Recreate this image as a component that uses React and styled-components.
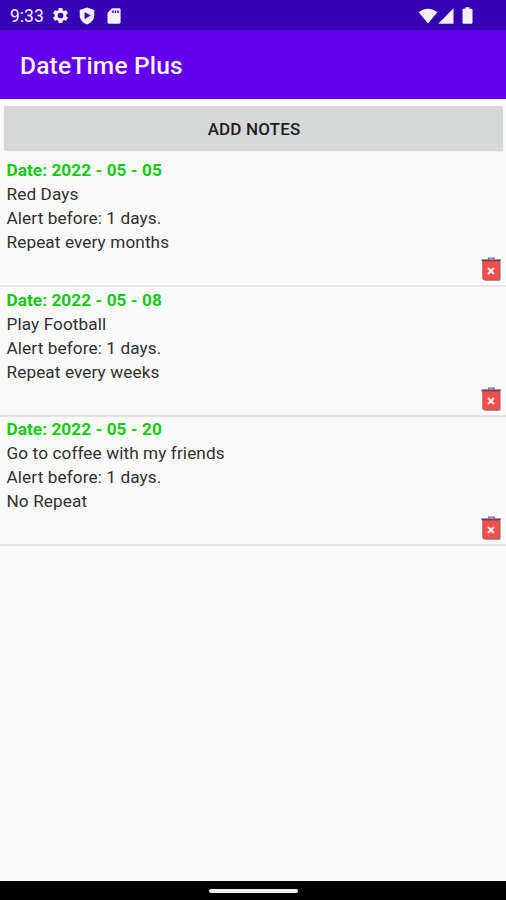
import React from "react";
import styled, { createGlobalStyle } from "styled-components";

const GlobalStyle = createGlobalStyle`
  * { box-sizing: border-box; }
  body { margin: 0; background: #fafafa; font-family: Roboto, sans-serif; }
`;

const Screen = styled.div`
  display: flex;
  flex-direction: column;
  height: 900px;
  width: 100%;
  overflow: hidden;
  background: #fafafa;
`;

const StatusBar = styled.header`
  flex: none;
  height: 30px;
  padding: 1px 33px 0 10px;
  display: flex;
  align-items: center;
  justify-content: space-between;
  background: #3700b3;
  color: #f4efff;
`;

const StatusGroup = styled.div`
  display: flex;
  align-items: center;
  gap: ${(p) => p.$gap}px;
  svg { display: block; fill: currentColor; }
`;

const Clock = styled.span`
  width: 34px;
  margin-right: -3px;
  font-size: 17.5px;
  line-height: 30px;
  white-space: nowrap;
`;

const AppBar = styled.div`
  flex: none;
  height: 69px;
  padding: 2px 20px 0;
  display: flex;
  align-items: center;
  background: #6200ee;
`;

const Title = styled.h1`
  margin: 0;
  color: #f8f2ff;
  font-size: 24.5px;
  font-weight: 500;
  letter-spacing: 0.2px;
`;

const AddButton = styled.button`
  flex: none;
  height: 45px;
  margin: 7px 3px 7px 4px;
  padding: 0 0 0 1px;
  border: 0;
  border-radius: 2px;
  background: #d6d7d7;
  box-shadow: 0 0 1px #d6d7d7;
  color: #1d1e1e;
  font: 500 17px Roboto, sans-serif;
  letter-spacing: 0.15px;
`;

const NoteList = styled.ul`
  flex: 1;
  margin: 0;
  padding: 0;
  list-style: none;
`;

const Note = styled.li`
  height: 129.4px;
  padding: 1.4px 4px 0 6.5px;
  display: flex;
  justify-content: space-between;
  border-bottom: 2px solid #e5e5e5;
`;

const NoteText = styled.div`
  line-height: 23.9px;
  font-size: 17.2px;
  letter-spacing: 0.1px;
  color: #303030;
`;

const NoteLine = styled.div`
  font-weight: 400;
  white-space: nowrap;
`;

const NoteDate = styled(NoteLine)`
  font-weight: 700;
  letter-spacing: 0.06px;
  color: #12c912;
`;

const DeleteButton = styled.button`
  align-self: flex-end;
  margin: 0 0 3px;
  padding: 0;
  border: 0;
  background: none;
  line-height: 0;
`;

const NavBar = styled.footer`
  flex: none;
  height: 19px;
  padding-top: 1px;
  display: flex;
  align-items: center;
  justify-content: center;
  background: #000;
`;

const NavHandle = styled.div`
  width: 89px;
  height: 4px;
  border-radius: 2px;
  background: #f3eef3;
`;

const NOTES = [
  { date: "2022 - 05 - 05", name: "Red Days", repeat: "Repeat every months" },
  { date: "2022 - 05 - 08", name: "Play Football", repeat: "Repeat every weeks" },
  { date: "2022 - 05 - 20", name: "Go to coffee with my friends", repeat: "No Repeat" },
];

const GearIcon = () => (
  <svg width="19" height="19" viewBox="0 0 24 24">
    <path d="M19.14 12.94c.04-.3.06-.61.06-.94 0-.32-.02-.64-.07-.94l2.03-1.58c.18-.14.23-.41.12-.61l-1.92-3.32c-.12-.22-.37-.29-.59-.22l-2.39.96c-.5-.38-1.03-.7-1.62-.94l-.36-2.54c-.04-.24-.24-.41-.48-.41h-3.84c-.24 0-.43.17-.47.41l-.36 2.54c-.59.24-1.13.57-1.62.94l-2.39-.96c-.22-.08-.47 0-.59.22L2.74 8.87c-.12.21-.08.47.12.61l2.03 1.58c-.05.3-.09.63-.09.94s.02.64.07.94l-2.03 1.58c-.18.14-.23.41-.12.61l1.92 3.32c.12.22.37.29.59.22l2.39-.96c.5.38 1.03.7 1.62.94l.36 2.54c.05.24.24.41.48.41h3.84c.24 0 .44-.17.47-.41l.36-2.54c.59-.24 1.13-.56 1.62-.94l2.39.96c.22.08.47 0 .59-.22l1.92-3.32c.12-.22.07-.47-.12-.61l-2.01-1.58zM12 15.6A3.6 3.6 0 1 1 12 8.4a3.6 3.6 0 0 1 0 7.2z" />
  </svg>
);

const ShieldIcon = () => (
  <svg width="16" height="18" viewBox="0 0 16 18">
    <path fillRule="evenodd" d="M8 .5 15.3 3v5.200c0 4.200-2.800 7.700-7.300 9.300C3.500 15.900.7 12.400.7 8.200V3zM5.600 5v7.200L11.500 8.600z" />
  </svg>
);

const SdCardIcon = () => (
  <svg width="14" height="16" viewBox="0 0 14 16">
    <path fillRule="evenodd" d="M5 .3h7.200c.8 0 1.400.6 1.400 1.400v12.600c0 .8-.6 1.400-1.400 1.400H1.900c-.8 0-1.400-.6-1.400-1.400V4.800zM5.300 2.400v2.700h1.400V2.400zm2.500 0v2.700h1.400V2.400zm2.500 0v2.700h1.400V2.400z" />
  </svg>
);

const SdCardSlot = styled.span`
  margin-left: 2px;
`;

const WifiIcon = () => (
  <svg width="20" height="16" viewBox="0 0 20 16">
    <path d="M.7 4.300C5.700-.4 14.300-.4 19.300 4.300L10 15.600z" />
  </svg>
);

const SignalIcon = () => (
  <svg width="16" height="16" viewBox="0 0 16 16">
    <path d="M15.500.3v15.400H.2z" />
  </svg>
);

const BatterySlot = styled.span`
  margin-left: 8px;
`;

const BatteryIcon = () => (
  <svg width="11" height="17" viewBox="0 0 11 17">
    <path d="M3.400.3h4.200v1.500h1.600c.8 0 1.300.5 1.300 1.300v12.300c0 .8-.5 1.300-1.300 1.300H1.800c-.8 0-1.300-.5-1.300-1.300V3.100c0-.8.5-1.300 1.300-1.300h1.600z" />
  </svg>
);

const TrashIcon = () => (
  <svg width="21" height="25" viewBox="0 0 21 25">
    <path d="M3 5h16.700v17.500q0 1.500-1.500 1.500H4z" fill="#aaa9b2" />
    <path d="M1.700 4h17v17.300q0 1.500-1.500 1.500H3.200q-1.500 0-1.500-1.500z" fill="#f44e4b" stroke="#a64356" strokeWidth=".7" />
    <path d="M7.500 2.500V1.200h5.600v1.300" fill="none" stroke="#777187" strokeWidth="1.300" />
    <path d="M.5 3.300h19.300" stroke="#68445f" strokeWidth="1.800" />
    <path d="m7 11 6 6m0-6-6 6" stroke="#fff0ee" strokeWidth="2" />
  </svg>
);

export default function App() {
  return (
    <Screen>
      <GlobalStyle />
      <StatusBar>
        <StatusGroup $gap={9.5}>
          <Clock>9:33</Clock>
          <GearIcon />
          <ShieldIcon />
          <SdCardSlot>
            <SdCardIcon />
          </SdCardSlot>
        </StatusGroup>
        <StatusGroup $gap={0}>
          <WifiIcon />
          <SignalIcon />
          <BatterySlot>
            <BatteryIcon />
          </BatterySlot>
        </StatusGroup>
      </StatusBar>
      <AppBar>
        <Title>DateTime Plus</Title>
      </AppBar>
      <AddButton type="button">ADD NOTES</AddButton>
      <NoteList>
        {NOTES.map((note) => (
          <Note key={note.date}>
            <NoteText>
              <NoteDate>Date: {note.date}</NoteDate>
              <NoteLine>{note.name}</NoteLine>
              <NoteLine>Alert before: 1 days.</NoteLine>
              <NoteLine>{note.repeat}</NoteLine>
            </NoteText>
            <DeleteButton type="button" aria-label="Delete note">
              <TrashIcon />
            </DeleteButton>
          </Note>
        ))}
      </NoteList>
      <NavBar>
        <NavHandle />
      </NavBar>
    </Screen>
  );
}
